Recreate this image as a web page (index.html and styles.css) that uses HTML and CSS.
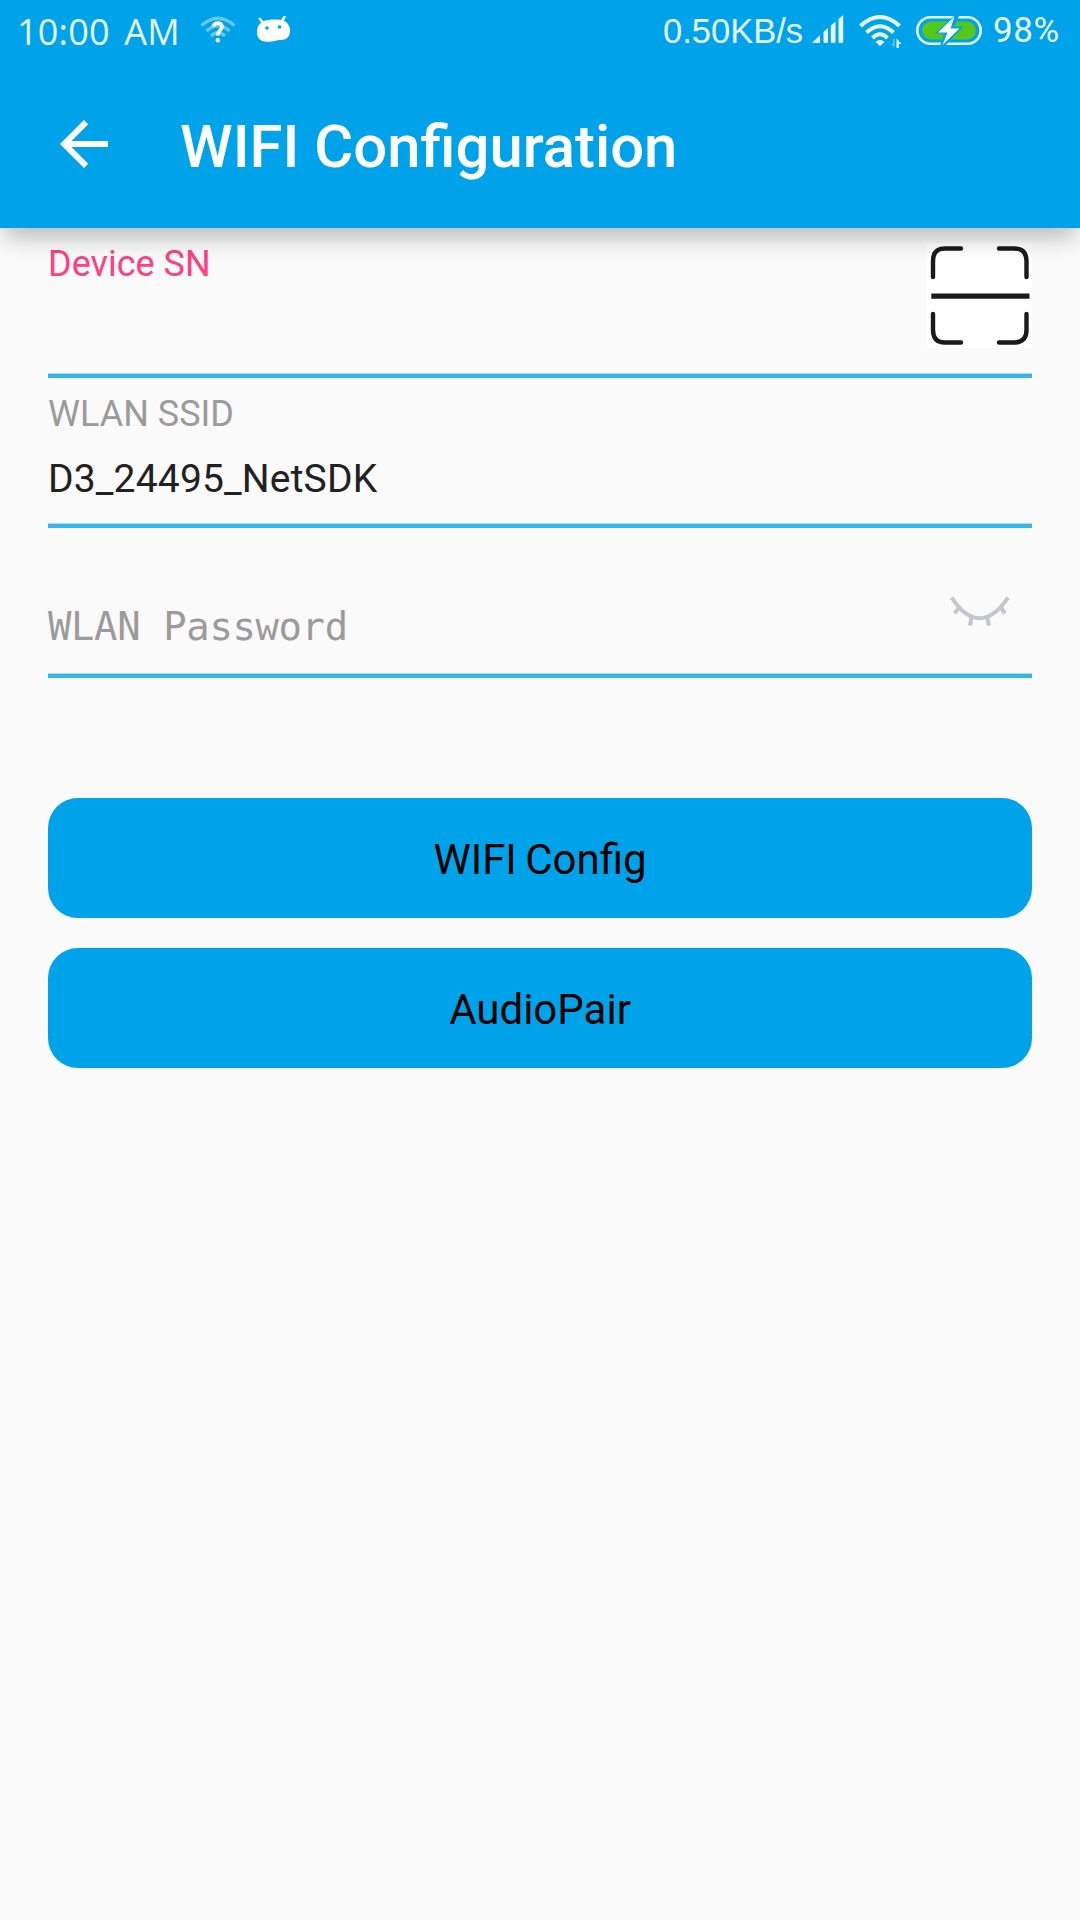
FILE: index.html
```html
<!DOCTYPE html>
<html lang="en">
<head>
<meta charset="utf-8">
<title>WIFI Configuration</title>
<link rel="stylesheet" href="styles.css">
</head>
<body>
<header class="app-header">
  <div class="status-bar">
    <div class="status-left">
      <span class="clock">10:00 AM</span>
      <svg class="wifi-unknown" width="36" height="28" viewBox="0 0 36 28" fill="none">
        <g stroke="#fff" stroke-width="3.2" opacity=".4">
          <path d="M1.5 9.5Q18 -5 34.500 9.500"/>
          <path d="M6.500 15Q18 4.500 29.500 15"/>
          <path d="M11 20Q18 13.500 25 20"/>
        </g>
        <path d="M13.500 10.500C13.500 6 22 6 22 10.700C22 14 17.800 14 17.800 19.500" stroke="#fff" stroke-width="3.600"/>
        <circle cx="17.800" cy="24.200" r="2.200" fill="#fff"/>
      </svg>
      <svg class="robot" width="36" height="28" viewBox="0 0 36 28">
        <path d="M4 3L8 8M28.500 1L25.500 6" stroke="#fff" stroke-width="2.600" stroke-linecap="round"/>
        <path d="M8 5C13 3.200 22 3 27 4.500C32 6 34.500 11 34 16C33.500 21 30 24 25 24C20 24 18 25.800 11 25.800C4 25.800 .5 21 1 15C1.500 10 4 6.500 8 5Z" fill="#fff"/>
        <circle cx="11" cy="12" r="1.800" fill="#00a3e9"/>
        <circle cx="23.500" cy="11" r="1.800" fill="#00a3e9"/>
      </svg>
    </div>
    <div class="status-right">
      <span class="speed">0.50KB/s</span>
      <svg class="signal" width="32" height="28" viewBox="0 0 32 28" fill="#e6f6fd">
        <path d="M0 28L8 20V26.500Q8 28 6.500 28Z"/>
        <path d="M11.500 17L16 13V26.500Q16 28 14.500 28H13Q11.500 28 11.500 26.500Z"/>
        <path d="M18.800 10.500L23.500 6.500V26.500Q23.500 28 22 28H20.300Q18.800 28 18.800 26.500Z"/>
        <path d="M26.500 4L31.200 0V26.500Q31.200 28 29.700 28H28Q26.500 28 26.500 26.500Z"/>
      </svg>
      <svg class="wifi" width="44" height="34" viewBox="0 0 44 34" fill="none">
        <g stroke="#e6f6fd" stroke-width="4">
          <path d="M1.500 11Q21 -7 40.500 11"/>
          <path d="M7.500 17.500Q21 5 34.500 17.500"/>
          <path d="M13.500 23Q21 15.500 28.500 23"/>
        </g>
        <path d="M16.500 27Q21 23 25.500 27L21 31Z" fill="#e6f6fd"/>
        <path d="M35.500 24V32L31.500 29H34V24Z" fill="#69c5f0"/>
        <path d="M37.500 33V23.500L42.500 29H39.800V33Z" fill="#e6f6fd"/>
      </svg>
      <svg class="battery" width="66" height="30" viewBox="0 0 66 30">
        <rect x="1.300" y="1.300" width="63.400" height="26.400" rx="13.200" fill="none" stroke="#e6f6fd" stroke-width="2.600"/>
        <rect x="6" y="5.500" width="54" height="18" rx="9" fill="#58c71b"/>
        <path d="M38 0L18.500 17.500H28L24 30H29L47.500 10.500H38.500L43 0Z" fill="#00a3e9"/>
        <path d="M38.500 .5L22 16.500H31.500L26.500 29L43.500 12.500H34.500Z" fill="#fff"/>
      </svg>
      <span class="percent">98%</span>
    </div>
  </div>
  <div class="toolbar">
    <svg class="back" width="72" height="72" viewBox="0 0 24 24" fill="#fff"><path d="M20 11H7.830l5.590-5.590L12 4l-8 8 8 8 1.410-1.410L7.830 13H20z"/></svg>
    <h1 class="title">WIFI Configuration</h1>
  </div>
</header>
<main class="form">
  <section class="field">
    <div class="field-text"><label class="label active">Device SN</label></div>
    <svg class="scan" width="105" height="105" viewBox="0 0 105 105" fill="none" stroke="#1a1a1a" stroke-width="4.400" stroke-linecap="round">
      <path d="M6 34V18Q6 5.500 18 5.500H34M72 5.500H87Q99.500 5.500 99.500 18V34M6 71V87Q6 99.500 18 99.500H34M72 99.500H87Q99.500 99.500 99.500 87V71"/>
      <path d="M4.300 53.200H102.500" stroke-width="5.200" stroke-linecap="butt"/>
    </svg>
  </section>
  <section class="field">
    <div class="field-text">
      <label class="label">WLAN SSID</label>
      <span class="value">D3_24495_NetSDK</span>
    </div>
  </section>
  <section class="field">
    <div class="field-text"><span class="hint">WLAN Password</span></div>
    <svg class="eye" width="60" height="32" viewBox="0 0 60 32" fill="none" stroke="#c5c5cf" stroke-width="4">
      <path d="M1.800 1.500C19 29 40 29 58 1.500"/>
      <path d="M9.500 11L4.500 17.500M21.500 21L20 29.500M37 21L39 29.500M50.500 11L55 17.500"/>
    </svg>
  </section>
  <div class="actions">
    <button class="btn">WIFI Config</button>
    <button class="btn">AudioPair</button>
  </div>
</main>
</body>
</html>
```
FILE: styles.css
```css
* { box-sizing: border-box; }
body {
  margin: 0;
  min-height: 1920px;
  background: #fafafa;
  font-family: Roboto, sans-serif;
  color: #212121;
}
.app-header {
  position: relative;
  z-index: 1;
  height: 228px;
  background: #00a3e9;
  box-shadow: 0 12px 24px -4px rgba(0, 0, 0, .28);
}
.status-bar {
  display: flex;
  justify-content: space-between;
  height: 60px;
  padding: 0 18px 0 17px;
  color: #e6f6fd;
  white-space: nowrap;
}
.status-left, .status-right { display: flex; align-items: flex-start; }
.clock { width: 183px; margin-top: 6px; font: 36px/52px "Open Sans", sans-serif; letter-spacing: .2px; word-spacing: 5px; }
.wifi-unknown { margin-top: 16px; }
.robot { margin: 16px 0 0 20px; }
.speed { width: 149px; margin-top: 5px; font: 34.500px/52px "Liberation Sans", sans-serif; }
.signal { margin-top: 15px; }
.wifi { margin: 15px 0 0 15px; }
.battery { margin: 16px 0 0 13px; }
.percent { width: 69px; margin: 5px 0 0 11px; font: 400 35px/52px Roboto, sans-serif; letter-spacing: .6px; }
.toolbar {
  display: flex;
  align-items: center;
  height: 168px;
  padding: 0 48px;
}
.title { margin: 6px 0 0 60px; font-size: 59.800px; line-height: 70px; font-weight: 500; color: #fff; }
.form { padding: 0 48px; }
.field {
  display: flex;
  justify-content: space-between;
  height: 150px;
  border-bottom: 4px solid #35b6e8;
  box-shadow: inset 0 -1px #a8ddf3;
}
.field-text { display: flex; flex-direction: column; }
.label { margin-top: 15px; font-size: 36px; line-height: 42px; color: #9b9b9b; }
.label.active { color: #ff4081; }
.value { margin-top: 20px; font-size: 39px; line-height: 48px; letter-spacing: .17px; }
.hint { margin-top: 75px; font: 38.900px/48px "DejaVu Sans Mono", monospace; letter-spacing: -.360px; color: #9b9b9b; }
.scan { margin-top: 15px; background: #fff; }
.eye { margin: 68px 22px 0 0; }
.actions { display: flex; flex-direction: column; gap: 30px; padding-top: 120px; }
.btn {
  height: 120px;
  padding: 4px 0 0;
  border: 0;
  border-radius: 30px;
  background: #00a3e9;
  color: #000;
  font: 42px/50px Roboto, sans-serif;
  word-spacing: -2px;
}
```
